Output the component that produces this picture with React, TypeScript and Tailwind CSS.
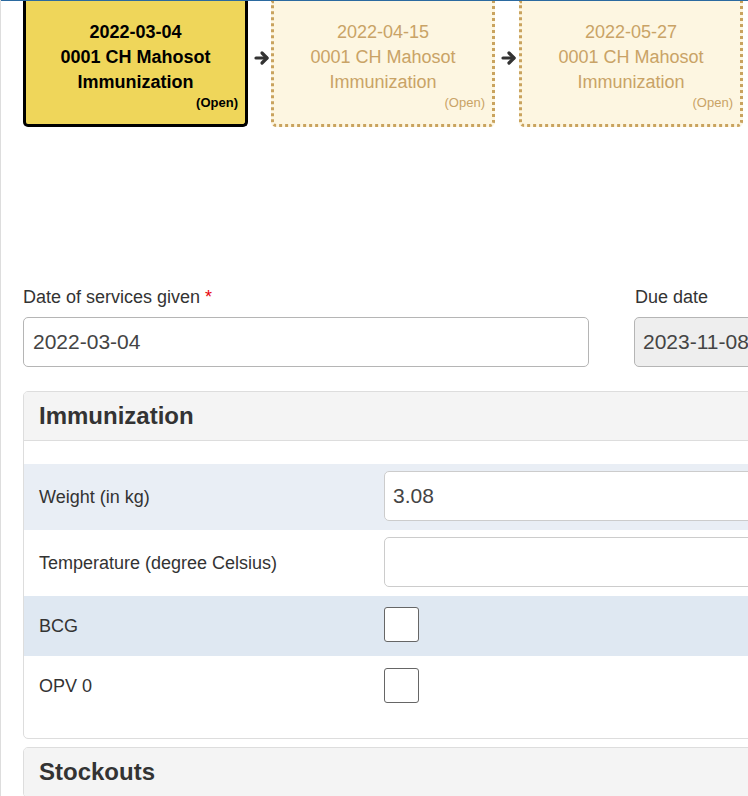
import React from "react";

const Arrow = () => (
  <svg viewBox="0 0 16 16" className="w-[16px] h-[16px] shrink-0" fill="none" stroke="#333" strokeWidth="3.2" strokeLinecap="round" strokeLinejoin="round">
    <path d="M2 8h11" />
    <path d="M8 3l5 5-5 5" />
  </svg>
);

const Card = ({ date, active }: { date: string; active?: boolean }) => (
  <div
    className={
      active
        ? "w-[225px] h-[127px] shrink-0 bg-[#efd65a] border-[3px] border-t-0 border-black rounded-b-[5px] flex flex-col pt-[20px] text-black font-bold"
        : "w-[224px] h-[127px] shrink-0 bg-[#fdf6e1] border-[3px] border-t-0 border-dotted border-[#c9a35e] rounded-b-[5px] flex flex-col pt-[20px] text-[#c9a366]"
    }
  >
    <div className="text-center text-[18px] leading-[25px]">{date}</div>
    <div className="text-center text-[18px] leading-[25px]">0001 CH Mahosot</div>
    <div className="text-center text-[18px] leading-[25px]">Immunization</div>
    <div className="text-right text-[13px] leading-[16px] pr-[7px]">(Open)</div>
  </div>
);

export default function App() {
  return (
    <div
      className="w-[748px] h-[796px] overflow-hidden relative bg-white text-[#333]"
      style={{ fontFamily: '"Liberation Sans", Arial, sans-serif' }}
    >
      <div className="absolute top-0 left-0 right-0 h-[1px] bg-[#2b6aa0]" />
      <div className="absolute top-0 left-0 bottom-0 w-[1px] bg-[#dddddd]" />

      <div className="flex items-start pl-[23px]">
        <Card date="2022-03-04" active />
        <div className="ml-[6px] mr-[1px] mt-[50px]">
          <Arrow />
        </div>
        <Card date="2022-04-15" />
        <div className="ml-[6px] mr-[2px] mt-[50px]">
          <Arrow />
        </div>
        <Card date="2022-05-27" />
      </div>

      <div className="flex pl-[23px] mt-[160px] w-[1000px]">
        <div className="w-[566px] shrink-0">
          <div className="text-[18px] leading-[20px] text-[#333] h-[20px]">
            Date of services given <span className="text-red-600">*</span>
          </div>
          <div className="mt-[10px] h-[50px] border border-[#b5b5b5] rounded-[5px] flex items-center px-[9px] text-[21px] text-[#444]">
            2022-03-04
          </div>
        </div>
        <div className="ml-[45px] w-[300px] shrink-0">
          <div className="text-[18px] leading-[20px] text-[#333] h-[20px] pl-[1px]">Due date</div>
          <div className="mt-[10px] h-[50px] border border-[#b5b5b5] rounded-[5px] bg-[#eeeeee] flex items-center px-[8px] text-[21px] text-[#444]">
            2023-11-08
          </div>
        </div>
      </div>

      <div className="ml-[23px] mt-[24px] w-[900px] border border-[#dddddd] rounded-[5px] overflow-hidden">
        <div className="h-[49px] bg-[#f4f4f4] border-b border-[#dddddd] flex items-center px-[15px] text-[24px] font-bold text-[#333]">
          Immunization
        </div>
        <div className="pt-[23px] pb-[22px]">
          <div className="h-[66px] bg-[#e9eef5] flex items-center">
            <div className="w-[360px] pl-[15px] text-[18px] text-[#333]">Weight (in kg)</div>
            <div className="w-[500px] h-[50px] border border-[#cccccc] rounded-[5px] bg-white flex items-center px-[8px] text-[21px] text-[#444] -mt-[2px]">
              3.08
            </div>
          </div>
          <div className="h-[66px] bg-white flex items-center">
            <div className="w-[360px] pl-[15px] text-[18px] text-[#333]">Temperature (degree Celsius)</div>
            <div className="w-[500px] h-[50px] border border-[#cccccc] rounded-[5px] bg-white -mt-[2px]" />
          </div>
          <div className="h-[60px] bg-[#dfe8f2] flex items-center">
            <div className="w-[360px] pl-[15px] text-[18px] text-[#333]">BCG</div>
            <div className="w-[35px] h-[35px] border border-[#666] rounded-[3px] bg-white -mt-[3px]" />
          </div>
          <div className="h-[60px] bg-white flex items-center">
            <div className="w-[360px] pl-[15px] text-[18px] text-[#333]">OPV 0</div>
            <div className="w-[35px] h-[35px] border border-[#666] rounded-[3px] bg-white -mt-[2px]" />
          </div>
        </div>
      </div>

      <div className="ml-[23px] mt-[8px] w-[900px] border border-[#dddddd] rounded-[5px] overflow-hidden">
        <div className="h-[49px] bg-[#f4f4f4] border-b border-[#dddddd] flex items-center px-[15px] text-[24px] font-bold text-[#333]">
          Stockouts
        </div>
      </div>
    </div>
  );
}
